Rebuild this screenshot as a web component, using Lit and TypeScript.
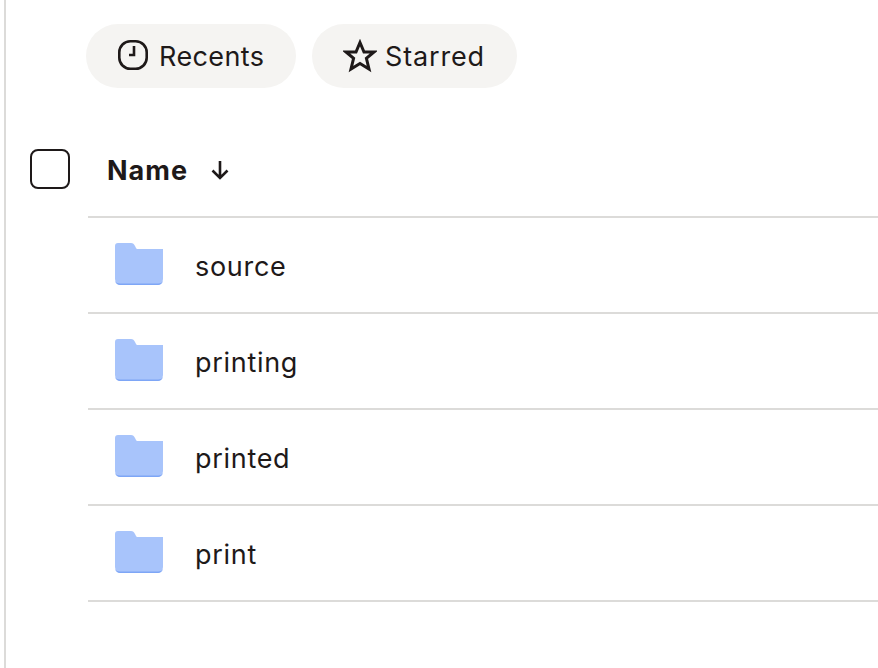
import { LitElement, css, html } from "lit";
import { customElement } from "lit/decorators.js";

const folders = ["source", "printing", "printed", "print"];

@customElement("app-root")
export class AppRoot extends LitElement {
  static styles = css`
    :host {
      display: block;
      width: 878px;
      height: 668px;
      overflow: hidden;
      background: #fff;
      color: #1e1919;
      font-family: Inter, "Liberation Sans", sans-serif;
    }
    .page {
      height: 668px;
      margin-left: 4px;
      border-left: 2px solid #dcdbd9;
      box-sizing: border-box;
      padding-top: 24px;
    }
    .pills {
      display: flex;
      gap: 16px;
      margin-left: 80px;
    }
    .pill {
      display: flex;
      align-items: center;
      gap: 8px;
      height: 64px;
      border-radius: 32px;
      background: #f5f4f2;
      font-size: 27px;
      box-sizing: border-box;
    }
    .recents {
      width: 210px;
      padding-left: 31px;
      letter-spacing: 0.4px;
    }
    .starred {
      width: 205px;
      padding-left: 31px;
      letter-spacing: 0.85px;
    }
    .header {
      display: flex;
      align-items: center;
      height: 130px;
      padding-top: 36px;
      border-bottom: 2px solid #dcdbd9;
      margin-left: 82px;
      box-sizing: border-box;
      position: relative;
    }
    .check {
      position: absolute;
      left: -58px;
      top: 61px;
      width: 40px;
      height: 40px;
      box-sizing: border-box;
      border: 2px solid #1e1919;
      border-radius: 8px;
    }
    .name {
      margin-left: 19px;
      font-size: 27px;
      font-weight: 700;
      letter-spacing: 1px;
    }
    .arrow {
      margin-left: 21px;
    }
    .row {
      display: flex;
      align-items: center;
      height: 96px;
      padding-top: 2px;
      margin-left: 82px;
      box-sizing: border-box;
      border-bottom: 2px solid #dcdbd9;
      font-size: 27px;
      letter-spacing: 0.7px;
    }
    .folder {
      margin-left: 27px;
      margin-right: 32px;
      margin-bottom: 4px;
    }
    svg {
      display: block;
      flex: none;
    }
  `;

  render() {
    return html`<div class="page">
      <div class="pills">
        <div class="pill recents">
          <svg width="34" height="34" viewBox="0 0 34 34" fill="none" stroke="#1e1919" stroke-width="2.6">
            <rect x="2.300" y="2.300" width="27.400" height="27.400" rx="11" />
            <path d="M17 7V16H12" />
          </svg>
          Recents
        </div>
        <div class="pill starred">
          <svg width="34" height="34" viewBox="0 0 34 34" fill="none" stroke="#1e1919" stroke-width="3">
            <path d="M17 3.500L21 13H31L23.400 19.400L26 30L17 24.400L8 30L10.600 19.400L3 13H13Z" />
          </svg>
          Starred
        </div>
      </div>
      <div class="header">
        <div class="check"></div>
        <span class="name">Name</span>
        <svg class="arrow" width="22" height="22" viewBox="0 0 22 22" fill="none" stroke="#1e1919" stroke-width="2.600">
          <path d="M11 2V19M3.500 11.500L11 19L18.500 11.500" />
        </svg>
      </div>
      ${folders.map(
        (f) => html`<div class="row">
          <svg class="folder" width="48" height="42" viewBox="0 0 48 42">
            <path d="M0 3a3 3 0 0 1 3-3H16c2 0 3 1 4 3l1 2c.6 1 1 1 2 1H48V36a6 6 0 0 1-6 6H6a6 6 0 0 1-6-6Z" fill="#a8c4fb" />
            <path d="M0 38a6 6 0 0 0 6 4H42a6 6 0 0 0 6-4a6 6 0 0 1-6 2.500H6a6 6 0 0 1-6-2.500Z" fill="#7ea6f6" />
          </svg>
          ${f}
        </div>`
      )}
    </div>`;
  }
}
